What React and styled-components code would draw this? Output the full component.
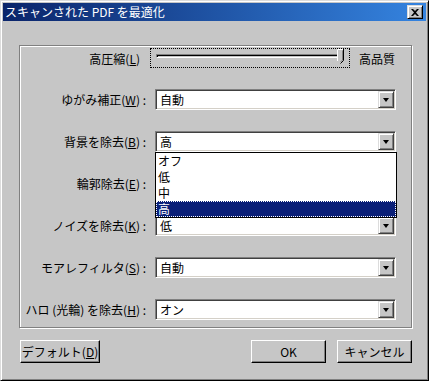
import React from 'react'
import styled, { createGlobalStyle } from 'styled-components'

const GlobalStyle = createGlobalStyle`
  html, body {
    margin: 0;
    padding: 0;
    background: #c6c6c6;
  }
  body {
    font-family: "Noto Sans CJK JP", "DejaVu Sans", sans-serif;
    font-size: 12px;
    color: #000;
  }
`

// 輪郭除去 value sits under the open list, so it is left blank
const fields = [
    { label: 'ゆがみ補正', key: 'W', value: '自動' },
    { label: '背景を除去', key: 'B', value: '高', open: true },
    { label: '輪郭除去', key: 'E', value: '' },
    { label: 'ノイズを除去', key: 'K', value: '低' },
    { label: 'モアレフィルタ', key: 'S', value: '自動' },
    { label: 'ハロ (光輪) を除去', key: 'H', value: 'オン' },
]

const options = ['オフ', '低', '中', '高']

function Accel({ k }) {
    return <>(<u>{k}</u>)</>
}

function Combo({ value, open, selected }) {
    return (
        <ComboWrap>
            <ComboBox>
                <ComboValue>{value}</ComboValue>
                <DropButton><Arrow /></DropButton>
            </ComboBox>
            {open && (
                <DropList>
                    {options.map((o) => (
                        <DropItem key={o} $selected={o === selected}>{o}</DropItem>
                    ))}
                </DropList>
            )}
        </ComboWrap>
    )
}

export default function App() {
    return (
        <>
            <GlobalStyle />
            <Window>
                <TitleBar>
                    <span>スキャンされた PDF を最適化</span>
                    <CloseButton>
                        <svg width="8" height="7" viewBox="0 0 8 7">
                            <path d="M0 0h2l2 2 2-2h2L5 3.5 8 7H6L4 5 2 7H0l3-3.5z" fill="#000" />
                        </svg>
                    </CloseButton>
                </TitleBar>
                <Body>
                    <GroupBox>
                        <SliderRow>
                            <SliderLabel>高圧縮<Accel k="L" /></SliderLabel>
                            <SliderBox>
                                <Track />
                                <Thumb width="7" height="15" viewBox="0 0 7 15">
                                    <path d="M0.5 0.5H6.5V11.5L3.5 14.5L0.5 11.5Z" fill="#c6c6c6" />
                                    <path d="M0.5 12V0.5H6" stroke="#fff" fill="none" />
                                    <path d="M6.5 0V11.5L3.5 14.5" stroke="#000" fill="none" />
                                    <path d="M5.5 1.5V11L3.5 13" stroke="#808080" fill="none" />
                                </Thumb>
                            </SliderBox>
                            <span>高品質</span>
                        </SliderRow>
                        {fields.map((f) => (
                            <FieldRow key={f.key} $open={f.open}>
                                <FieldLabel>{f.label}<Accel k={f.key} /> :</FieldLabel>
                                <Combo value={f.value} open={f.open} selected="高" />
                            </FieldRow>
                        ))}
                    </GroupBox>
                    <ButtonRow>
                        <Button $width="80px">デフォルト<Accel k="D" /></Button>
                        <RightButtons>
                            <Button>OK</Button>
                            <Button>キャンセル</Button>
                        </RightButtons>
                    </ButtonRow>
                </Body>
            </Window>
        </>
    )
}

const Window = styled.div`
    width: 429px;
    height: 381px;
    box-sizing: border-box;
    background: #c6c6c6;
    border: 1px solid;
    border-color: #dcdcdc #000 #000 #dcdcdc;
    box-shadow: inset 1px 1px 0 #fff, inset -1px -1px 0 #808080;
    padding: 2px;
    display: flex;
    flex-direction: column;
`

const TitleBar = styled.div`
    height: 18px;
    display: flex;
    align-items: center;
    justify-content: space-between;
    padding: 0 3px 0 2px;
    background: linear-gradient(to right, #0a246a, #3584e0);
    color: #fff;
    font-size: 12px;
    line-height: 18px;
`

const CloseButton = styled.div`
    width: 16px;
    height: 14px;
    box-sizing: border-box;
    display: flex;
    align-items: center;
    justify-content: center;
    background: #c6c6c6;
    border: 1px solid;
    border-color: #dcdcdc #000 #000 #dcdcdc;
    box-shadow: inset 1px 1px 0 #fff, inset -1px -1px 0 #808080;
`

const Body = styled.div`
    flex: 1;
    display: flex;
    flex-direction: column;
    padding: 24px 14px 0 16px;
`

const GroupBox = styled.div`
    height: 283px;
    box-sizing: border-box;
    border: 1px solid #808080;
    box-shadow: inset 1px 1px 0 #fff, 1px 1px 0 #fff;
    padding: 2px 15px 0 2px;
    display: flex;
    flex-direction: column;
    gap: 21px;
`

const SliderRow = styled.div`
    height: 20px;
    display: flex;
    align-items: center;
    gap: 9px;
`

const SliderLabel = styled.span`
    width: 118px;
    text-align: right;
    margin-right: 1px;
`

const SliderBox = styled.div`
    position: relative;
    width: 200px;
    height: 20px;
    box-sizing: border-box;
    border: 1px dotted #000;
    padding: 5px 5px 0 5px;
`

const Track = styled.div`
    height: 4px;
    box-sizing: border-box;
    border: 1px solid;
    border-color: #808080 #fff #fff #808080;
    box-shadow: inset 1px 1px 0 #000;
`

const Thumb = styled.svg`
    position: absolute;
    right: 5px;
    top: 0;
`

const FieldRow = styled.div`
    height: 21px;
    display: grid;
    grid-template-columns: 124px 1fr;
    column-gap: 9px;
    align-items: center;
    position: relative;
    z-index: ${(p) => (p.$open ? 2 : 1)};
`

const FieldLabel = styled.span`
    text-align: right;
    white-space: nowrap;
`

const ComboWrap = styled.div`
    position: relative;
    height: 21px;
`

const ComboBox = styled.div`
    height: 21px;
    box-sizing: border-box;
    display: flex;
    align-items: center;
    justify-content: space-between;
    background: #fff;
    border: 1px solid;
    border-color: #808080 #fff #fff #808080;
    box-shadow: inset 1px 1px 0 #404040, inset -1px -1px 0 #d4d0c8;
    padding: 1px 1px 1px 4px;
`

const ComboValue = styled.span`
    line-height: 17px;
`

const DropButton = styled.div`
    width: 16px;
    height: 17px;
    box-sizing: border-box;
    display: flex;
    align-items: center;
    justify-content: center;
    background: #c6c6c6;
    border: 1px solid;
    border-color: #dcdcdc #404040 #404040 #dcdcdc;
    box-shadow: inset 1px 1px 0 #fff, inset -1px -1px 0 #808080;
`

const Arrow = styled.div`
    width: 0;
    height: 0;
    border-left: 3.5px solid transparent;
    border-right: 3.5px solid transparent;
    border-top: 4px solid #000;
`

const DropList = styled.div`
    position: absolute;
    top: 100%;
    left: 0;
    right: -1px;
    background: #fff;
    border: 1px solid #000;
    z-index: 5;
`

const DropItem = styled.div`
    height: 16px;
    line-height: 16px;
    padding-left: 2px;
    background: ${(p) => (p.$selected ? '#0a1f78' : '#fff')};
    color: ${(p) => (p.$selected ? '#fff' : '#000')};
    outline: ${(p) => (p.$selected ? '1px dotted #fff' : 'none')};
    outline-offset: -1px;
`

const ButtonRow = styled.div`
    margin-top: 12px;
    display: flex;
    justify-content: space-between;
    padding-left: 1px;
`

const RightButtons = styled.div`
    display: flex;
    gap: 11px;
`

const Button = styled.div`
    width: ${(p) => p.$width || '75px'};
    height: 23px;
    box-sizing: border-box;
    display: flex;
    align-items: center;
    justify-content: center;
    background: #c6c6c6;
    border: 1px solid;
    border-color: #fff #000 #000 #fff;
    box-shadow: inset -1px -1px 0 #808080;
`
